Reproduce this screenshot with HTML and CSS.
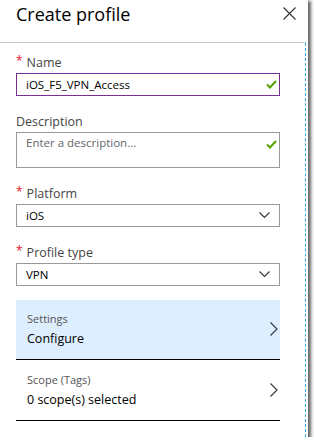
FILE: index.html
```html
<!DOCTYPE html>
<html lang="en">
<head>
    <meta charset="UTF-8">
    <title>Create profile</title>
    <link rel="stylesheet" href="styles.css">
</head>
<body>
<div class="frame">
    <header class="blade-header">
        <h1>Create profile</h1>
        <button class="close-button" aria-label="Close">
            <svg width="13" height="13" viewBox="0 0 13 13"><path d="M0.5 0.5 L12.5 12.5 M12.5 0.5 L0.5 12.5" stroke="#333" stroke-width="1.1" fill="none"/></svg>
        </button>
    </header>

    <main class="blade-content">
        <div class="field">
            <label class="field-label"><span class="required">*</span>Name</label>
            <div class="text-input focused">
                <span class="value">iOS_F5_VPN_Access</span>
                <svg class="check" width="11" height="9" viewBox="0 0 11 9"><path d="M1 4.5 L4 7.5 L10 1" stroke="#57a300" stroke-width="2" fill="none"/></svg>
            </div>
        </div>

        <div class="field">
            <label class="field-label">Description</label>
            <div class="text-input textarea">
                <span class="placeholder">Enter a description...</span>
                <svg class="check" width="11" height="9" viewBox="0 0 11 9"><path d="M1 4.5 L4 7.5 L10 1" stroke="#57a300" stroke-width="2" fill="none"/></svg>
            </div>
        </div>

        <div class="field">
            <label class="field-label"><span class="required">*</span>Platform</label>
            <div class="select">
                <span class="value">iOS</span>
                <svg class="chevron-down" width="11" height="7" viewBox="0 0 11 7"><path d="M0.5 0.5 L5.5 5.5 L10.5 0.5" stroke="#333" stroke-width="1.1" fill="none"/></svg>
            </div>
        </div>

        <div class="field">
            <label class="field-label"><span class="required">*</span>Profile type</label>
            <div class="select">
                <span class="value">VPN</span>
                <svg class="chevron-down" width="11" height="7" viewBox="0 0 11 7"><path d="M0.5 0.5 L5.5 5.5 L10.5 0.5" stroke="#333" stroke-width="1.1" fill="none"/></svg>
            </div>
        </div>

        <div class="nav-item selected">
            <div class="nav-text">
                <div class="nav-title">Settings</div>
                <div class="nav-value">Configure</div>
            </div>
            <svg class="chevron-right" width="8" height="14" viewBox="0 0 8 14"><path d="M0.5 0.5 L7 7 L0.5 13.5" stroke="#333" stroke-width="1.1" fill="none"/></svg>
        </div>

        <div class="nav-item">
            <div class="nav-text">
                <div class="nav-title">Scope (Tags)</div>
                <div class="nav-value">0 scope(s) selected</div>
            </div>
            <svg class="chevron-right" width="8" height="14" viewBox="0 0 8 14"><path d="M0.5 0.5 L7 7 L0.5 13.5" stroke="#333" stroke-width="1.1" fill="none"/></svg>
        </div>
    </main>
</div>
</body>
</html>
```

FILE: styles.css
```css
* {
    box-sizing: border-box;
}

body {
    margin: 0;
    padding: 0;
    background-color: #fff;
    font-family: "Segoe UI", "Open Sans", sans-serif;
    color: #000;
}

.frame {
    width: 308px;
    height: 437px;
    background-color: #fff;
    box-shadow: 2px 2px 3px 1px #666;
    display: flex;
    flex-direction: column;
}

.blade-header {
    height: 43px;
    border-bottom: 1px solid #c8c8c8;
    margin-right: 2px;
    display: flex;
    justify-content: space-between;
    align-items: flex-start;
    flex-shrink: 0;
}

.blade-header h1 {
    margin: 0;
    padding: 2px 0 0 16px;
    font-size: 18px;
    line-height: 24px;
    font-weight: 400;
    color: #000;
}

.close-button {
    background: none;
    border: none;
    padding: 0;
    margin: 7px 10px 0 0;
    width: 13px;
    height: 13px;
    cursor: pointer;
}

.close-button svg {
    display: block;
}

.blade-content {
    flex-grow: 1;
    margin-right: 2px;
    border-right: 1px dashed #2ea6e0;
    padding: 9px 25px 0 16px;
}

.field {
    margin-bottom: 15px;
}

.field-label {
    display: block;
    font-size: 12.5px;
    color: #444;
    height: 21px;
    line-height: 21px;
}

.required {
    color: #e81123;
    margin-right: 4px;
    font-size: 12px;
    vertical-align: top;
    line-height: 18px;
}

.text-input,
.select {
    border: 1px solid #999;
    height: 23px;
    display: flex;
    align-items: center;
    justify-content: space-between;
    padding: 0 2px 0 9px;
    font-size: 11.5px;
}

.text-input.focused {
    border: 1px solid #7a2f93;
}

.text-input.textarea {
    height: 36px;
    align-items: flex-start;
    padding-top: 2px;
}

.text-input.textarea .check {
    margin-top: 5px;
}

.placeholder {
    color: #666;
}

.select {
    padding-right: 9px;
}

.nav-item {
    display: flex;
    align-items: center;
    justify-content: space-between;
    height: 60px;
    border-bottom: 1px solid #000;
    padding: 0 2px 2px 11px;
}

.nav-item.selected {
    background-color: #ddeefe;
    margin-top: -1px;
}

.nav-item + .nav-item {
    height: 61px;
    padding-bottom: 0;
}

.nav-title {
    font-size: 11px;
    color: #555;
    margin-bottom: 4px;
}

.nav-value {
    font-size: 12.5px;
    color: #000;
}
```
